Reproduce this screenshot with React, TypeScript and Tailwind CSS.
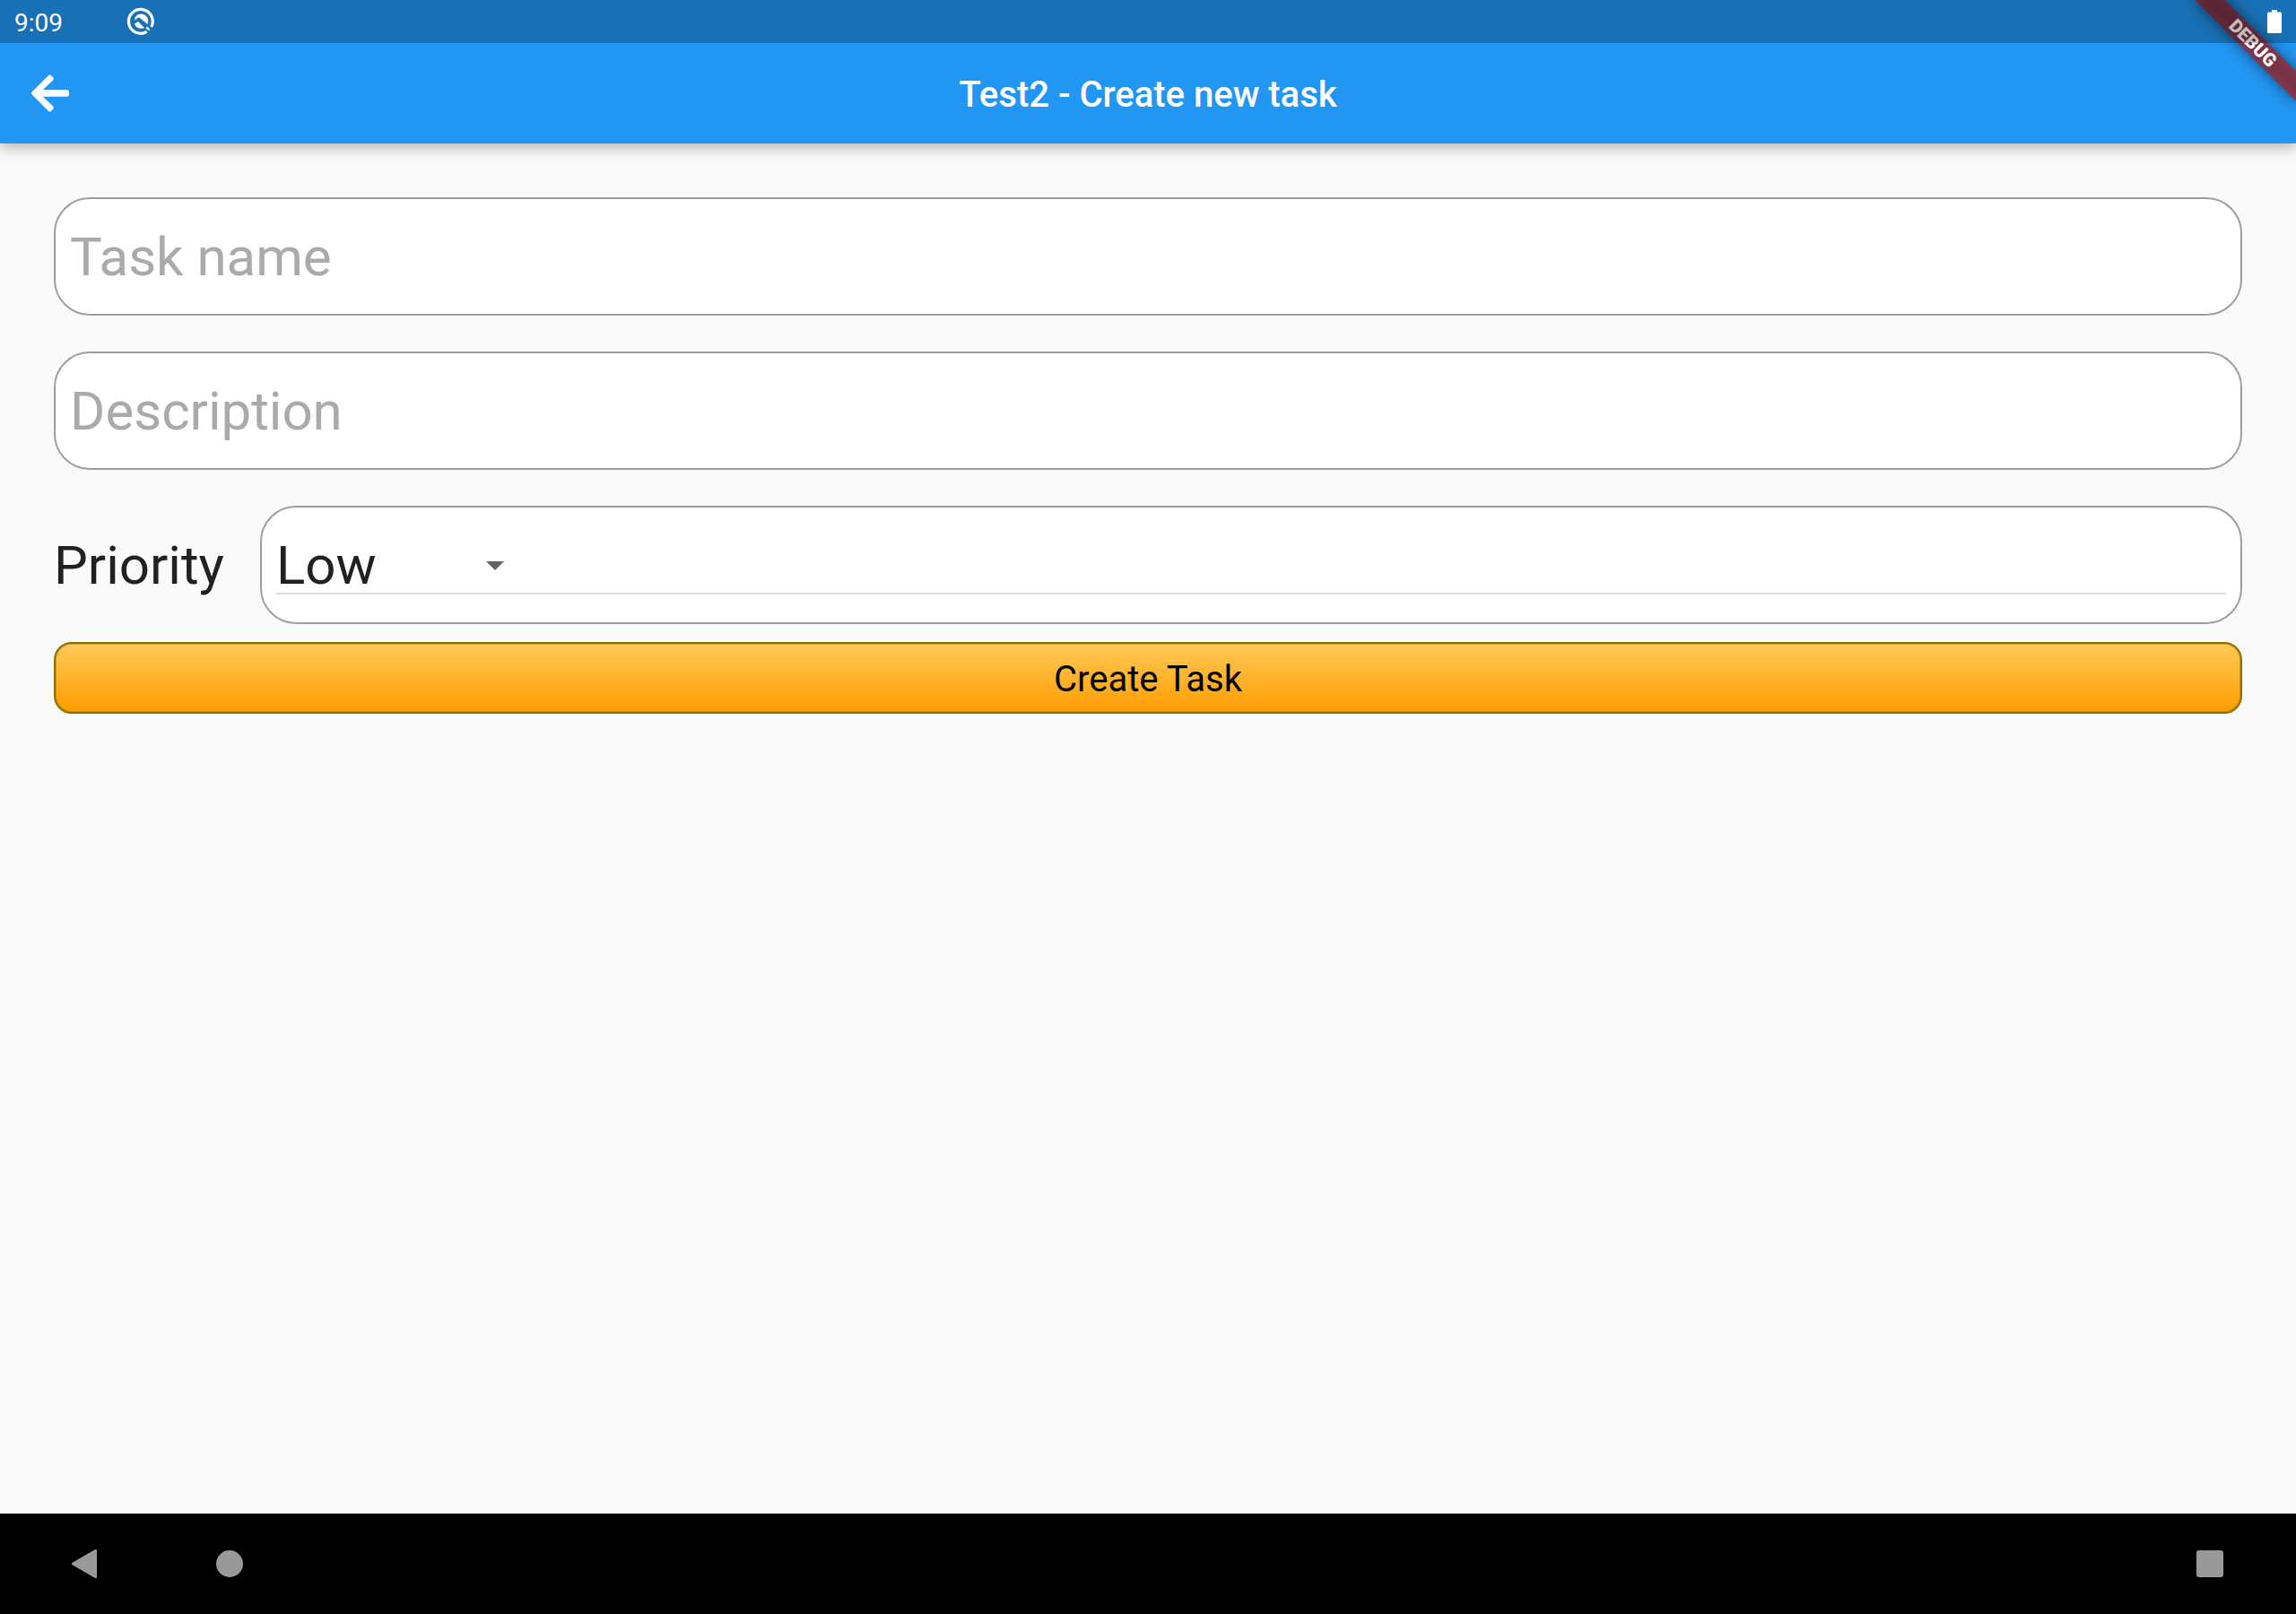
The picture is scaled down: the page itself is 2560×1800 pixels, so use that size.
import React from "react";
import { FaArrowLeft } from "react-icons/fa";

function DebugBanner() {
  return (
    <div className="pointer-events-none absolute top-0 right-0 h-0 w-0">
      <div className="absolute top-0 left-0 h-0 w-0 origin-top-left rotate-45">
        <div className="absolute top-[56px] left-[-80px] h-[24px] w-[160px] bg-black/50 blur-[8px]" />
        <div className="absolute top-[56px] left-[-80px] flex h-[24px] w-[160px] items-center justify-center bg-[#b71c1c]/63">
          <span className="text-[20.4px] leading-none font-black text-white">DEBUG</span>
        </div>
      </div>
    </div>
  );
}

function DebugIcon() {
  return (
    <svg className="h-[32px] w-[32px]" viewBox="0 0 32 32" fill="none">
      <path d="M23.3 27 A13.4 13.4 0 1 1 28 21.5" stroke="white" strokeWidth="3.2" transform="rotate(3 16 16)" />
      <path d="M22.300 22.300 L25.500 25.500" stroke="white" strokeWidth="2.4" />
      <path d="M10.6 9.8 A8 8 0 0 1 23.4 19.1 L13.8 11.2 L9.2 14.6 A8 8 0 0 1 10.6 9.8 Z" fill="white" />
      <path d="M8.8 18.8 L12.9 15.9 L20 22.9 A8 8 0 0 1 8.8 18.8 Z" fill="white" />
    </svg>
  );
}

function StatusBar() {
  return (
    <div className="relative z-10 flex h-[48px] items-center bg-black/25 pr-[16px] pl-[16px]">
      <span className="mt-[3px] w-[125px] text-[28px] leading-[32px] text-white">9:09</span>
      <DebugIcon />
      <svg className="ml-auto h-[26px] w-[16px]" viewBox="0 0 16 26" fill="white">
        <path d="M5 0h6v2.5h3.5a1.5 1.5 0 0 1 1.5 1.5v20.500a1.500 1.500 0 0 1-1.500 1.500h-13a1.500 1.500 0 0 1-1.500-1.500v-20.500a1.500 1.500 0 0 1 1.500-1.500h3.500z" />
      </svg>
    </div>
  );
}

function Field({ label }: { label: string }) {
  return (
    <div className="flex h-[132px] items-center rounded-[40px] border-2 border-[#9e9e9e] bg-white px-[16px] pt-[2px] text-[60px] leading-[70px] text-[#aaaaaa]">
      {label}
    </div>
  );
}

export default function App() {
  return (
    <div className="flex h-[1800px] w-[2560px] flex-col overflow-hidden bg-[#fafafa] font-['Roboto',sans-serif]">
      <header className="relative z-10 h-[160px] bg-[#2196f3] shadow-[0_4px_16px_0_rgba(0,0,0,0.3)]">
        <DebugBanner />
        <StatusBar />
        <div className="grid h-[112px] grid-cols-[1fr_auto_1fr] items-center px-[32px]">
          <FaArrowLeft className="h-[48px] w-[48px] text-white" />
          <h1 className="pt-[4px] text-[40px] leading-[48px] font-medium text-white">Test2 - Create new task</h1>
        </div>
      </header>

      <main className="flex flex-1 flex-col px-[60px] pt-[60px]">
        <div className="flex flex-col gap-[40px]">
          <Field label="Task name" />
          <Field label="Description" />
          <div className="flex items-center">
            <span className="w-[230px] pt-[2px] text-[60px] leading-[70px] text-[#212121]">Priority</span>
            <div className="flex h-[132px] flex-1 items-end rounded-[40px] border-2 border-[#9e9e9e] bg-white px-[16px] pb-[31px]">
              <div className="flex h-[62px] flex-1 items-center border-b-2 border-[#dddddd]">
                <span className="w-[234px] text-[60px] leading-[70px] text-[#212121]">Low</span>
                <svg className="h-[10px] w-[20px]" viewBox="0 0 20 10">
                  <path d="M0 0h20L10 10z" fill="#616161" />
                </svg>
              </div>
            </div>
          </div>
        </div>
        <button className="mt-[20px] flex h-[80px] items-center justify-center rounded-[20px] border-2 border-[#8b7000] bg-[linear-gradient(to_bottom,#ffca58,#ff9c00)] pt-[4px] text-[40px] leading-[48px] text-black shadow-[inset_0_0_0_1px_rgba(139,112,0,0.4)]">
          Create Task
        </button>
      </main>

      <nav className="flex h-[112px] items-center bg-black pr-[81px] pl-[80px]">
        <svg className="h-[32px] w-[28px]" viewBox="0 0 28 32">
          <path d="M1.500 16L26.500 1.500V30.500Z" fill="#999999" stroke="#999999" strokeWidth="3" strokeLinejoin="round" />
        </svg>
        <div className="ml-[133px] h-[30px] w-[30px] rounded-full bg-[#999999]" />
        <div className="ml-auto h-[30px] w-[30px] rounded-[3px] bg-[#999999]" />
      </nav>
    </div>
  );
}
